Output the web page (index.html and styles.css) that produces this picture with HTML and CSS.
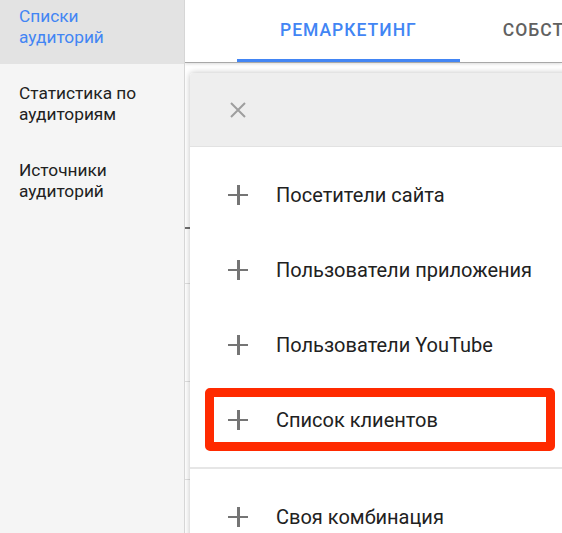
FILE: index.html
```html
<!DOCTYPE html>
<html lang="ru">

<head>
  <meta charset="UTF-8">
  <meta name="viewport" content="width=device-width, initial-scale=1.0">
  <title>Аудитории</title>
  <link rel="stylesheet" href="styles.css">
</head>

<body>
  <aside class="sidebar">
    <ul class="side-list">
      <li class="side-item active">Списки<br>аудиторий</li>
      <li class="side-item">Статистика по<br>аудиториям</li>
      <li class="side-item">Источники<br>аудиторий</li>
    </ul>
  </aside>

  <main class="main">
    <div class="tab-bar">
      <div class="tab active">Ремаркетинг</div>
      <div class="tab">Собственные</div>
    </div>

    <!-- то, что лежит под диалогом -->
    <div class="backdrop">
      <div class="backdrop-head"></div>
      <div class="backdrop-row first"></div>
      <div class="backdrop-row"></div>
      <div class="backdrop-row"></div>
    </div>

    <div class="dialog">
      <div class="dialog-head">
        <svg class="icon-close" viewBox="0 0 18 18" width="18" height="18">
          <path d="M2 2 L16 16 M16 2 L2 16" stroke="#9e9e9e" stroke-width="2" fill="none" />
        </svg>
      </div>
      <ul class="menu-group">
        <li class="menu-item"><span class="plus"></span>Посетители сайта</li>
        <li class="menu-item"><span class="plus"></span>Пользователи приложения</li>
        <li class="menu-item"><span class="plus"></span>Пользователи YouTube</li>
        <li class="menu-item marked"><span class="plus"></span>Список клиентов</li>
      </ul>
      <ul class="menu-group">
        <li class="menu-item"><span class="plus"></span>Своя комбинация</li>
      </ul>
    </div>
  </main>
</body>

</html>
```

FILE: styles.css
```css
*,
*::before,
*::after {
  margin: 0;
  padding: 0;
  box-sizing: border-box;
}

:root {
  --blue: #4285f4;
  --text: #212121;
  --icon: #757575;
  --line: #e0e0e0;
  --mark: #ff2a00;
}

body {
  display: flex;
  height: 533px;
  overflow: hidden;
  font-family: Roboto, "Noto Sans", sans-serif;
  color: var(--text);
  background: #fff;
}

ul {
  list-style-type: none;
}

/** левое меню */
.sidebar {
  width: 185px;
  flex-shrink: 0;
  background: #f5f5f5;
  border-right: 1px solid #d6d6d6;
}

.side-item {
  padding: 19px 10px 16px 19px;
  font-size: 17.3px;
  line-height: 21px;
  color: #212121;

  &.active {
    padding-top: 6px;
    color: var(--blue);
    background: #e3e3e3;
  }
}

.main {
  position: relative;
  flex: 1;
  display: flex;
  flex-direction: column;
  overflow: hidden;
}

.tab-bar {
  display: flex;
  height: 63px;
  padding-left: 52px;
  background: #fff;
  border-bottom: 1px solid #a8a8a8;
  box-shadow: 0 1px 3px rgba(0, 0, 0, .15);
  position: relative;
  z-index: 1;
}

.tab {
  padding: 0 43px;
  font-size: 17.5px;
  font-weight: 500;
  letter-spacing: 1px;
  text-transform: uppercase;
  line-height: 60px;
  color: #616161;
  white-space: nowrap;
  border-bottom: 3px solid transparent;

  &.active {
    color: var(--blue);
    border-bottom-color: var(--blue);
  }
}

.backdrop {
  flex: 1;
  background: #fff;
}

.backdrop-head {
  height: 166px;
  border-bottom: 2px solid #6f6f6f;
  width: 8px;
}

.backdrop-row {
  height: 98px;
  border-bottom: 1px solid var(--line);

  &.first {
    height: 55px;
  }
}

/** всплывающее окно */
.dialog {
  position: absolute;
  top: 73px;
  left: 5px;
  right: -40px;
  bottom: -60px;
  background: #fff;
  border-radius: 3px;
  box-shadow: 0 0 6px rgba(0, 0, 0, .25);
  z-index: 2;
}

.dialog-head {
  display: flex;
  align-items: center;
  height: 74px;
  padding-left: 39px;
  background: #eee;
  border-bottom: 1px solid #e2e2e2;
  border-radius: 3px 3px 0 0;
}

.menu-group {
  padding: 10px 0;

  &+& {
    border-top: 2px solid #e6e6e6;
  }
}

.menu-item {
  position: relative;
  display: flex;
  align-items: center;
  gap: 28px;
  height: 75px;
  padding-left: 38px;
  font-size: 20px;
  color: var(--text);

  /** красная рамка-выделение */
  &.marked::after {
    content: '';
    position: absolute;
    top: 6px;
    bottom: 6px;
    left: 15px;
    width: 350px;
    border: 9px solid var(--mark);
    border-radius: 5px;
  }
}

.plus {
  position: relative;
  width: 20px;
  height: 20px;
  flex-shrink: 0;

  &::before,
  &::after {
    content: '';
    position: absolute;
    background: var(--icon);
  }

  &::before {
    left: 0;
    right: 0;
    top: 9px;
    height: 2.5px;
  }

  &::after {
    top: 0;
    bottom: 0;
    left: 9px;
    width: 2.5px;
  }
}
```
